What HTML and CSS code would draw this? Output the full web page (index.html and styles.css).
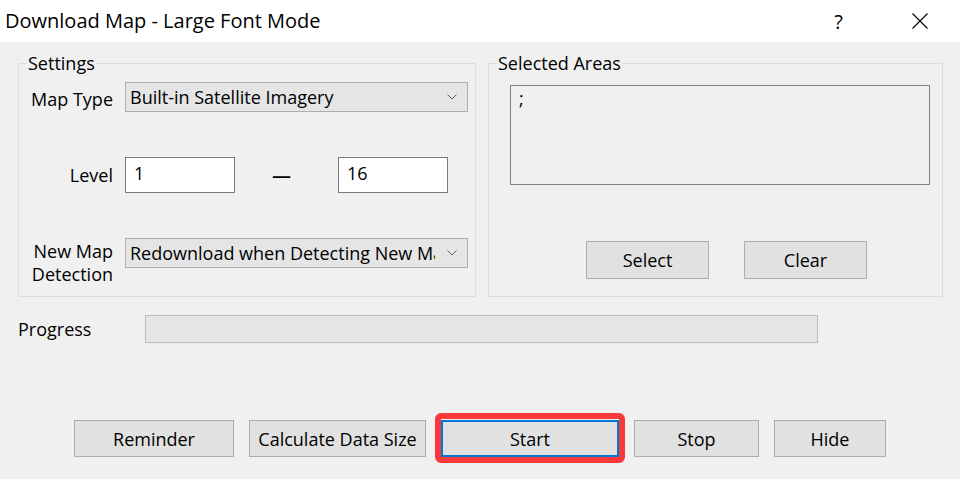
FILE: index.html
```html
<!DOCTYPE html>
<html lang="en">
<head>
    <meta charset="UTF-8">
    <meta name="viewport" content="width=device-width, initial-scale=1.0">
    <title>Download Map - Large Font Mode</title>
    <link rel="stylesheet" href="styles.css">
</head>
<body>
    <div class="window">
        <div class="titlebar">
            <span class="title">Download Map - Large Font Mode</span>
            <div class="caption-buttons">
                <button class="caption-btn help-btn">?</button>
                <button class="caption-btn close-btn">
                    <svg width="16" height="16" viewBox="0 0 16 16">
                        <path d="M0.5 0.5 L15.5 15.5 M15.5 0.5 L0.5 15.5" stroke="#000" stroke-width="1.1" fill="none"/>
                    </svg>
                </button>
            </div>
        </div>

        <div class="dialog-body">
            <div class="groups">
                <fieldset class="group settings">
                    <legend>Settings</legend>

                    <div class="field-row map-type-row">
                        <label class="field-label">Map Type</label>
                        <div class="combo">
                            <span class="combo-text">Built-in Satellite Imagery</span>
                            <svg class="chevron" width="10" height="6" viewBox="0 0 10 6">
                                <path d="M0.5 0.5 L5 5 L9.5 0.5" stroke="#606060" stroke-width="1" fill="none"/>
                            </svg>
                        </div>
                    </div>

                    <div class="field-row level-row">
                        <label class="field-label">Level</label>
                        <div class="text-input">1</div>
                        <span class="level-sep">—</span>
                        <div class="text-input">16</div>
                    </div>

                    <div class="field-row detection-row">
                        <label class="field-label two-line">New Map<br>Detection</label>
                        <div class="combo">
                            <span class="combo-text">Redownload when Detecting New Map Version</span>
                            <svg class="chevron" width="10" height="6" viewBox="0 0 10 6">
                                <path d="M0.5 0.5 L5 5 L9.5 0.5" stroke="#606060" stroke-width="1" fill="none"/>
                            </svg>
                        </div>
                    </div>
                </fieldset>

                <fieldset class="group areas">
                    <legend>Selected Areas</legend>
                    <div class="area-list">;</div>
                    <div class="area-actions">
                        <button class="btn select-btn">Select</button>
                        <button class="btn clear-btn">Clear</button>
                    </div>
                </fieldset>
            </div>

            <div class="progress-row">
                <span class="progress-label">Progress</span>
                <div class="progress-bar"></div>
            </div>

            <div class="action-row">
                <button class="btn reminder-btn">Reminder</button>
                <button class="btn size-btn">Calculate Data Size</button>
                <button class="btn start-btn">Start</button>
                <button class="btn stop-btn">Stop</button>
                <button class="btn hide-btn">Hide</button>
            </div>
        </div>
    </div>
</body>
</html>
```

FILE: styles.css
```css
:root {
    --window-bg: #f0f0f0;
    --button-bg: #e1e1e1;
    --button-border: #adadad;
    --group-border: #dcdcdc;
    --input-border: #7a7a7a;
    --focus-color: #0078d7;
    --mark-color: #fa3a3a;
}

* {
    margin: 0;
    padding: 0;
    box-sizing: border-box;
}

body {
    background-color: var(--window-bg);
    color: #000;
    font-family: "Open Sans", "Noto Sans", sans-serif;
    font-size: 18px;
    line-height: 24px;
}

.window {
    width: 960px;
    height: 479px;
    overflow: hidden;
}

/* title bar */
.titlebar {
    height: 42px;
    background: #fff;
    display: flex;
    align-items: center;
    padding-left: 5px;
}

.title {
    font-size: 20px;
}

.caption-buttons {
    margin-left: auto;
    display: flex;
    height: 100%;
}

.caption-btn {
    width: 81px;
    height: 100%;
    border: none;
    background: transparent;
    font-family: inherit;
    font-size: 20px;
    display: flex;
    align-items: center;
    justify-content: center;
}

.close-btn svg {
    display: block;
}

/* dialog content */
.dialog-body {
    padding: 9px 17px 0 18px;
}

.groups {
    display: grid;
    grid-template-columns: 458px 455px;
    column-gap: 12px;
}

.group {
    height: 246px;
    border: 1px solid var(--group-border);
    min-width: 0;
}

.group legend {
    margin-left: 8px;
    padding: 0 1px;
    line-height: 24px;
}

.field-row {
    display: flex;
    align-items: center;
}

.field-label {
    width: 94px;
    margin-right: 12px;
    text-align: right;
    flex-shrink: 0;
}

.map-type-row {
    margin-top: 7px;
}

.map-type-row .field-label {
    padding-top: 4px;
}

.combo {
    width: 343px;
    height: 30px;
    border: 1px solid var(--button-border);
    background: #e5e5e5;
    display: flex;
    align-items: center;
    padding: 0 10px 0 4px;
}

.combo-text {
    flex: 1;
    white-space: nowrap;
    overflow: hidden;
    margin-right: 12px;
}

.chevron {
    flex-shrink: 0;
}

.level-row {
    margin-top: 45px;
}

.text-input {
    width: 110px;
    height: 36px;
    border: 1px solid var(--input-border);
    background: #fff;
    padding: 3px 8px 0;
}

.level-sep {
    width: 103px;
    padding-left: 37px;
    font-size: 19px;
    font-weight: 600;
    line-height: 20px;
}

.detection-row {
    margin-top: 45px;
    align-items: flex-start;
}

.two-line {
    line-height: 23px;
    margin-top: 2px;
}

/* selected areas */
.area-list {
    width: 420px;
    height: 100px;
    margin: 10px 0 0 21px;
    border: 1px solid #828282;
    padding: 0 8px;
}

.area-actions {
    display: flex;
    gap: 35px;
    margin: 56px 0 0 97px;
}

.btn {
    height: 38px;
    border: 1px solid var(--button-border);
    background: var(--button-bg);
    font-family: inherit;
    font-size: 18px;
    color: #000;
}

.select-btn,
.clear-btn {
    width: 123px;
}

/* progress */
.progress-row {
    display: flex;
    align-items: center;
    margin-top: 18px;
}

.progress-label {
    width: 127px;
}

.progress-bar {
    width: 673px;
    height: 28px;
    border: 1px solid #bcbcbc;
    background: #e6e6e6;
}

/* bottom buttons */
.action-row {
    display: flex;
    gap: 15px;
    margin: 77px 0 0 56px;
}

.action-row .btn {
    height: 37px;
}

.reminder-btn { width: 160px; }
.size-btn { width: 177px; }
.start-btn { width: 178px; }
.stop-btn { width: 125px; }
.hide-btn { width: 112px; }

.start-btn {
    position: relative;
    border: 2px solid var(--focus-color);
}

/* highlight ring drawn around the start button */
.start-btn::after {
    content: "";
    position: absolute;
    top: -9px;
    left: -8px;
    right: -8px;
    bottom: -8px;
    border: 6px solid var(--mark-color);
    border-radius: 6px;
}
```
